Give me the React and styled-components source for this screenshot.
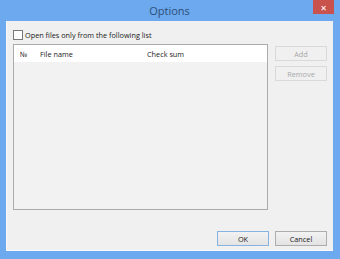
import styled, { createGlobalStyle } from 'styled-components'

const Global = createGlobalStyle`
  html, body { margin: 0; padding: 0; }
  body { font-family: "Open Sans", "DejaVu Sans", sans-serif; }
`

const Frame = styled.div`
  width: 340px;
  height: 259px;
  box-sizing: border-box;
  background: #6ca9ee;
  padding: 0 7px 8px 6px;
  display: flex;
  flex-direction: column;
`

const TitleBar = styled.div`
  height: 21px;
  display: flex;
  align-items: center;
  justify-content: center;
  position: relative;
  color: #2f4f78;
  font-size: 11px;
`

const CloseButton = styled.div`
  position: absolute;
  top: 0;
  right: -1px;
  width: 21px;
  height: 14px;
  background: #c9524c;
  color: #fff;
  font-size: 8px;
  font-weight: bold;
  display: flex;
  align-items: center;
  justify-content: center;
`

const Client = styled.div`
  flex: 1;
  background: #f0f0f0;
  border-left: 1px solid #fafafa;
  border-bottom: 1px solid #fafafa;
  display: flex;
  flex-direction: column;
  padding: 9px 6px 4px 6px;
  font-size: 7.3px;
  color: #1a1a1a;
`

const CheckRow = styled.label`
  display: flex;
  align-items: center;
  gap: 2px;
  height: 10px;
`

const Box = styled.span`
  width: 8px;
  height: 8px;
  border: 1px solid #7a7a7a;
  background: #fff;
`

const Middle = styled.div`
  display: flex;
  gap: 7px;
  margin-top: 4px;
`

const List = styled.div`
  width: 254px;
  height: 164px;
  border: 1px solid #ababab;
  background: #f2f2f2;
`

const Header = styled.div`
  height: 17px;
  background: #fff;
  display: flex;
  align-items: center;
`

const Col = styled.span`
  width: ${p => p.$w}px;
  padding-left: ${p => p.$pl || 0}px;
  box-sizing: border-box;
`

const Side = styled.div`
  display: flex;
  flex-direction: column;
  gap: 5px;
  padding-top: 2px;
`

const Button = styled.div`
  width: 52px;
  height: 15px;
  box-sizing: border-box;
  display: flex;
  align-items: center;
  justify-content: center;
  border: 1px solid ${p => (p.$disabled ? '#d9d9d9' : p.$default ? '#86b3e2' : '#adadad')};
  background: ${p => (p.$disabled ? '#f0f0f0' : 'linear-gradient(#f2f2f2, #e3e3e3)')};
  color: ${p => (p.$disabled ? '#a8a8a8' : '#1a1a1a')};
`

const Footer = styled.div`
  margin-top: auto;
  display: flex;
  justify-content: flex-end;
  gap: 6px;
`

export default function App() {
  return (
    <>
      <Global />
      <Frame>
        <TitleBar>
          Options
          <CloseButton>✕</CloseButton>
        </TitleBar>
        <Client>
          <CheckRow>
            <Box />
            Open files only from the following list
          </CheckRow>
          <Middle>
            <List>
              <Header>
                <Col $w={26} $pl={6}>№</Col>
                <Col $w={107}>File name</Col>
                <Col $w={100}>Check sum</Col>
              </Header>
            </List>
            <Side>
              <Button $disabled>Add</Button>
              <Button $disabled>Remove</Button>
            </Side>
          </Middle>
          <Footer>
            <Button $default>OK</Button>
            <Button>Cancel</Button>
          </Footer>
        </Client>
      </Frame>
    </>
  )
}
